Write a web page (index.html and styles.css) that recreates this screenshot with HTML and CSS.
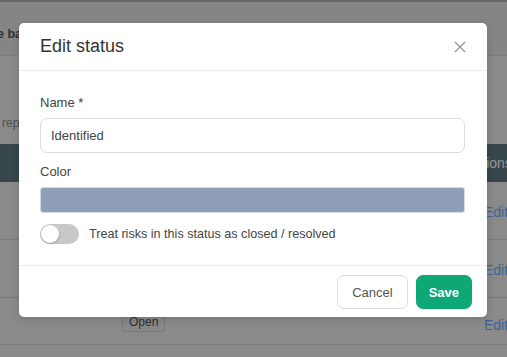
FILE: index.html
```html
<!DOCTYPE html>
<html lang="en">
<head>
    <meta charset="UTF-8">
    <title>Risk statuses</title>
    <link rel="stylesheet" href="styles.css">
</head>
<body>
    <div class="page">
        <div class="topbar"></div>
        <div class="page-head">
            <h2>Use base</h2>
        </div>
        <div class="page-desc">
            <p>reports</p>
        </div>
        <table class="status-table">
            <thead>
                <tr>
                    <th class="col-badge"></th>
                    <th class="col-actions">Actions</th>
                </tr>
            </thead>
            <tbody>
                <tr>
                    <td></td>
                    <td class="cell-actions"><a href="#">Edit</a></td>
                </tr>
                <tr>
                    <td></td>
                    <td class="cell-actions"><a href="#">Edit</a></td>
                </tr>
                <tr class="last">
                    <td><span class="badge">Open</span></td>
                    <td class="cell-actions"><a href="#">Edit</a></td>
                </tr>
            </tbody>
        </table>
    </div>

    <div class="overlay"></div>

    <div class="modal">
        <div class="modal-header">
            <h3>Edit status</h3>
            <button class="close" type="button" aria-label="Close">
                <svg width="12" height="12" viewBox="0 0 12 12">
                    <path d="M1 1 L11 11 M11 1 L1 11" stroke="#999" stroke-width="1.4" fill="none"/>
                </svg>
            </button>
        </div>
        <div class="modal-body">
            <label class="field-label">Name *</label>
            <input class="text-input" type="text" value="Identified">
            <label class="field-label">Color</label>
            <div class="color-swatch"></div>
            <div class="switch-row">
                <span class="switch"><span class="knob"></span></span>
                <span>Treat risks in this status as closed / resolved</span>
            </div>
        </div>
        <div class="modal-footer">
            <button class="btn btn-cancel" type="button">Cancel</button>
            <button class="btn btn-save" type="button">Save</button>
        </div>
    </div>
</body>
</html>
```

FILE: styles.css
```css
body {
    margin: 0;
    font-family: "Liberation Sans", Arial, sans-serif;
    background-color: #eeeeee;
    width: 507px;
    height: 357px;
    overflow: hidden;
    position: relative;
}
.page {
    width: 560px;
}
.topbar {
    height: 2px;
    background: #b0b0b0;
}
.page-head {
    height: 54px;
    box-sizing: border-box;
    padding-top: 10px;
    background: #e6e6e6;
    border-bottom: 1px solid #d8d8d8;
    display: flex;
    align-items: center;
}
.page-head h2 {
    margin: 0 0 0 -19px;
    font-size: 12.5px;
    color: #555;
}
.page-desc {
    height: 88px;
    box-sizing: border-box;
    padding-top: 60px;
}
.page-desc p {
    margin: 0 0 0 2px;
    font-size: 12px;
    color: #888;
}
.status-table {
    width: 560px;
    border-collapse: collapse;
    font-size: 13px;
    table-layout: fixed;
}
.status-table th {
    background: #5f7a84;
    color: #ffffff;
    height: 38px;
    padding: 0;
    text-align: left;
    font-weight: normal;
    font-size: 14px;
}
.status-table td {
    height: 54px;
    padding: 3px 0 0 0;
    border-bottom: 1px solid #d2d2d2;
    color: #555;
}
.col-badge {
    width: 466px;
}
.status-table td:first-child {
    padding-left: 122px;
}
.cell-actions {
    padding-left: 18px !important;
}
.status-table a {
    color: #6aaeff;
    text-decoration: none;
    font-size: 14px;
}
.status-table tr.last td {
    height: 46px;
    vertical-align: top;
    padding-top: 0;
}
.status-table tr.last .badge {
    display: inline-block;
    margin-top: 14px;
}
.status-table tr.last .cell-actions a {
    display: inline-block;
    margin-top: 19px;
}
.badge {
    border: 1px solid #cfcfcf;
    background: #eaeaea;
    border-radius: 3px;
    padding: 2px 6px;
    font-size: 12px;
    color: #555;
}
.overlay {
    position: absolute;
    inset: 0;
    background: rgba(0, 0, 0, 0.42);
}
.modal {
    position: absolute;
    top: 23px;
    left: 19px;
    width: 468px;
    background: #fff;
    border-radius: 5px;
    box-shadow: 0 2px 8px rgba(0, 0, 0, 0.15);
}
.modal-header {
    height: 47px;
    border-bottom: 1px solid #ececec;
    display: flex;
    align-items: center;
    justify-content: space-between;
    padding: 0 20px 0 21px;
}
.modal-header h3 {
    margin: 0;
    font-size: 18px;
    font-weight: normal;
    color: #333;
}
.close {
    border: none;
    background: none;
    padding: 0;
    width: 14px;
    height: 14px;
    display: flex;
    align-items: center;
    justify-content: center;
    margin-top: 1px;
}
.modal-body {
    padding: 24px 22px 21px 21px;
}
.field-label {
    display: block;
    font-size: 13px;
    color: #444;
    margin-bottom: 8px;
}
.text-input {
    display: block;
    box-sizing: border-box;
    width: 100%;
    height: 35px;
    border: 1px solid #dcdcdc;
    border-radius: 7px;
    padding: 0 10px;
    font-family: inherit;
    font-size: 13px;
    color: #444;
    margin-bottom: 11px;
}
.color-swatch {
    height: 24px;
    background: #8e9eb6;
    border: 1px solid #d6dbe3;
    border-radius: 3px;
    margin-bottom: 11px;
}
.switch-row {
    display: flex;
    align-items: center;
    gap: 10px;
    font-size: 12.6px;
    color: #444;
}
.switch {
    width: 39px;
    height: 20px;
    border-radius: 10px;
    background: #c8c8c8;
    position: relative;
    flex: none;
}
.knob {
    position: absolute;
    left: 1px;
    top: 1px;
    width: 18px;
    height: 18px;
    border-radius: 50%;
    background: #fff;
    box-shadow: 0 1px 2px rgba(0, 0, 0, 0.25);
}
.modal-footer {
    border-top: 1px solid #ececec;
    display: flex;
    justify-content: flex-end;
    gap: 8px;
    padding: 9px 15px 8px 0;
}
.btn {
    height: 34px;
    border-radius: 7px;
    font-family: inherit;
    font-size: 13px;
    padding: 0 14px;
}
.btn-cancel {
    background: #fff;
    border: 1px solid #dcdcdc;
    color: #555;
}
.btn-save {
    padding: 0 12px;
    background: #0ea876;
    border: 1px solid #0ea876;
    color: #fff;
    font-weight: bold;
}
```
